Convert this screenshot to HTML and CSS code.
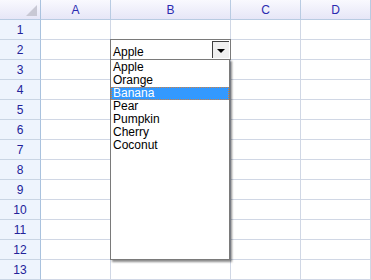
FILE: index.html
```html
<!DOCTYPE html>
<html lang="en">
    <head>
        <title>grid</title>
        <meta charset="UTF-8"/>
        <link rel="stylesheet" href="styles.css">
    </head>
    <body>
        <div id="page">
            <div class="sheet">
                <div class="corner"><span class="tri"></span></div>
                <div class="colhead">A</div>
                <div class="colhead">B</div>
                <div class="colhead">C</div>
                <div class="colhead">D</div>

                <div class="rowhead">1</div><div class="cell"></div><div class="cell"></div><div class="cell"></div><div class="cell"></div>
                <div class="rowhead">2</div><div class="cell"></div><div class="cell"></div><div class="cell"></div><div class="cell"></div>
                <div class="rowhead">3</div><div class="cell"></div><div class="cell"></div><div class="cell"></div><div class="cell"></div>
                <div class="rowhead">4</div><div class="cell"></div><div class="cell"></div><div class="cell"></div><div class="cell"></div>
                <div class="rowhead">5</div><div class="cell"></div><div class="cell"></div><div class="cell"></div><div class="cell"></div>
                <div class="rowhead">6</div><div class="cell"></div><div class="cell"></div><div class="cell"></div><div class="cell"></div>
                <div class="rowhead">7</div><div class="cell"></div><div class="cell"></div><div class="cell"></div><div class="cell"></div>
                <div class="rowhead">8</div><div class="cell"></div><div class="cell"></div><div class="cell"></div><div class="cell"></div>
                <div class="rowhead">9</div><div class="cell"></div><div class="cell"></div><div class="cell"></div><div class="cell"></div>
                <div class="rowhead">10</div><div class="cell"></div><div class="cell"></div><div class="cell"></div><div class="cell"></div>
                <div class="rowhead">11</div><div class="cell"></div><div class="cell"></div><div class="cell"></div><div class="cell"></div>
                <div class="rowhead">12</div><div class="cell"></div><div class="cell"></div><div class="cell"></div><div class="cell"></div>
                <div class="rowhead">13</div><div class="cell"></div><div class="cell"></div><div class="cell"></div><div class="cell"></div>
            </div>

            <!-- combo editor over B2 with its open list -->
            <div class="combo">
                <span class="combo_text">Apple</span>
                <span class="combo_btn"><span class="arrow"></span></span>
            </div>
            <ul class="droplist">
                <li>Apple</li>
                <li>Orange</li>
                <li class="selected">Banana</li>
                <li>Pear</li>
                <li>Pumpkin</li>
                <li>Cherry</li>
                <li>Coconut</li>
            </ul>
        </div>
    </body>
</html>
```

FILE: styles.css
```css
* {
    margin: 0px;
    padding: 0px;
}

body {
    background: #ffffff;
    font-family: "Liberation Sans", Arial, sans-serif;
    font-size: 12px;
}

#page {
    position: relative;
    width: 371px;
    height: 280px;
    overflow: hidden;
}

.sheet {
    display: grid;
    grid-template-columns: 41px 70px 120px 70px 70px;
    grid-auto-rows: 20px;
}

.cell {
    border-right: 1px solid #d0d7e5;
    border-bottom: 1px solid #d0d7e5;
}

.corner,
.colhead {
    background: linear-gradient(#f9f9fe, #e6e6f7);
    border-right: 1px solid #b8cbe2;
    border-bottom: 1px solid #b8cbe2;
}

.corner {
    position: relative;
    border-right-color: #a9c2de;
}

.tri {
    position: absolute;
    right: 3px;
    bottom: 3px;
    width: 0;
    height: 0;
    border-left: 11px solid transparent;
    border-bottom: 11px solid #c8c8d4;
}

.colhead {
    display: flex;
    align-items: center;
    justify-content: center;
    color: #2a2ab0;
    font-size: 12px;
}

.rowhead {
    display: flex;
    align-items: center;
    justify-content: center;
    background: #eef4fd;
    border-right: 1px solid #a9c2de;
    border-bottom: 1px solid #c9d5e4;
    color: #22229a;
    font-size: 12px;
}

.combo {
    position: absolute;
    left: 110px;
    top: 39px;
    width: 119px;
    height: 19px;
    border: 1px solid #7a7a7a;
    background: #ffffff;
    display: flex;
    align-items: flex-end;
}

.combo_text {
    flex: 1;
    padding-left: 2px;
    line-height: 14px;
}

.combo_btn {
    align-self: stretch;
    width: 16px;
    margin: 1px 1px 1px 0;
    border-left: 1px solid #404040;
    border-top: 1px solid #404040;
    background: #f0f0f0;
    display: flex;
    align-items: center;
    justify-content: center;
}

.arrow {
    width: 0;
    height: 0;
    border-left: 4px solid transparent;
    border-right: 4px solid transparent;
    border-top: 4px solid #000000;
    margin-top: 1px;
}

.droplist {
    position: absolute;
    left: 110px;
    top: 59px;
    width: 118px;
    height: 198px;
    border: 1px solid #7a7a7a;
    background: #ffffff;
    list-style: none;
    box-shadow: 2px 2px 2px rgba(0, 0, 0, 0.45);
    padding-top: 1px;
}

.droplist li {
    height: 13px;
    line-height: 13px;
    padding-left: 2px;
    font-size: 12px;
    color: #000000;
}

.droplist .selected {
    background: #3399ff;
    color: #ffffff;
    outline: 1px dotted #d08040;
    outline-offset: -1px;
}
```
